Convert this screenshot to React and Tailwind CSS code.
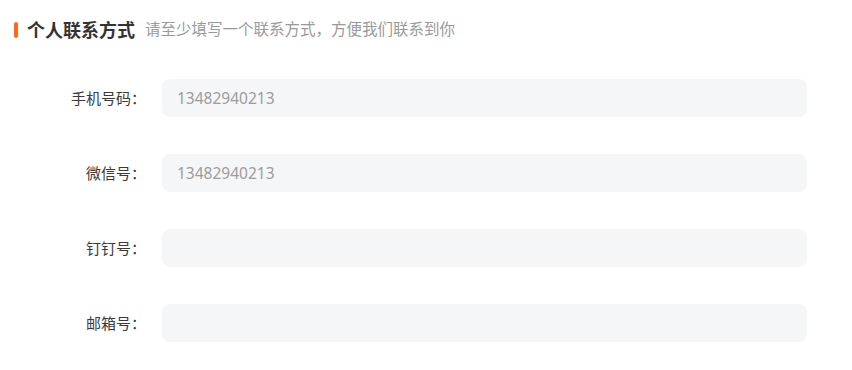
import React from 'react';

const fields = [
  { label: '手机号码：', value: '13482940213' },
  { label: '微信号：', value: '13482940213' },
  { label: '钉钉号：', value: '' },
  { label: '邮箱号：', value: '' },
];

export default function App() {
  return (
    <div
      className="w-[852px] h-[370px] bg-white overflow-hidden"
      style={{ fontFamily: '"Noto Sans", "Noto Sans CJK SC", sans-serif' }}
    >
      <div className="flex items-center h-4 mt-[22px] ml-[14px]">
        <span className="w-1 h-4 rounded-full bg-[#ff6a1a]" />
        <span className="ml-[9px] text-[18px] leading-none font-semibold text-[#333333]">
          个人联系方式
        </span>
        <span className="ml-[10px] text-[15.5px] leading-none text-[#9a9a9a]">
          请至少填写一个联系方式，方便我们联系到你
        </span>
      </div>

      <div className="mt-[41px] flex flex-col gap-[37px]">
        {fields.map((f) => (
          <div key={f.label} className="flex items-center h-[38px]">
            <label className="w-[146px] text-right text-[15px] text-[#3a3a3a]">
              {f.label}
            </label>
            <input
              className="ml-[16px] w-[645px] h-[38px] rounded-lg bg-[#f5f6f8] pl-[15px] text-[15.5px] text-[#9c9c9c] outline-none"
              value={f.value}
              readOnly
            />
          </div>
        ))}
      </div>
    </div>
  );
}
